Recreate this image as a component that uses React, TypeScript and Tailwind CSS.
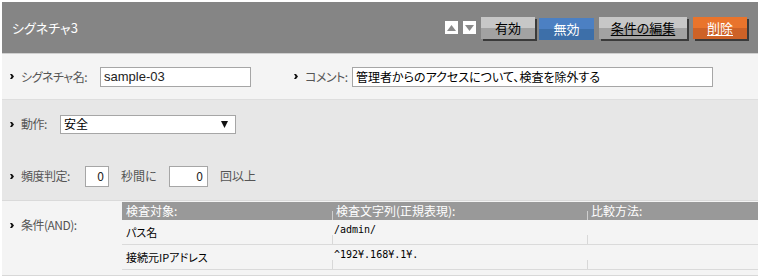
import React from "react";

const font = "font-['Noto_Sans_CJK_JP','Noto_Sans',sans-serif]";

function Bullet() {
  return (
    <svg width="4" height="5" viewBox="0 0 4 5" className="shrink-0">
      <path d="M0 0h2l2 2.5-2 2.5H0l1.5-2.5z" fill="#111" />
    </svg>
  );
}

function Label({ text, className = "" }: { text: string; className?: string }) {
  return (
    <div className={`flex items-center gap-[7px] shrink-0 whitespace-nowrap text-[12px] tracking-[-0.5px] text-[#555] [font-feature-settings:'palt'] ${className}`}>
      <Bullet />
      <span>{text}</span>
    </div>
  );
}

function HeadButton({
  label,
  top,
  bottom,
  w,
  light,
  underline,
  pressed,
}: {
  label: string;
  top: string;
  bottom: string;
  w: number;
  light?: boolean;
  underline?: boolean;
  pressed?: boolean;
}) {
  return (
    <button
      className={`h-[22px] flex items-center justify-center text-[13px] [font-feature-settings:'palt'] ${
        light ? "text-white" : "text-black"
      } ${underline ? "underline underline-offset-2" : ""} ${
        pressed ? "mt-[2px]" : "shadow-[2px_2px_0_#3a3a3a]"
      }`}
      style={{ width: w, background: `linear-gradient(${top} 50%, ${bottom} 50%)` }}
    >
      {label}
    </button>
  );
}

const rows = [
  { target: "パス名", pattern: "/admin/", method: "" },
  { target: "接続元IPアドレス", pattern: "^192¥.168¥.1¥.", method: "" },
];

export default function App() {
  return (
    <div className={`w-[760px] h-[278px] bg-white p-[2px] ${font}`}>
      <div className="w-[756px]">
        {/* header */}
        <div className="h-[52px] bg-[#858585] border-b border-[#cfcfcf] flex items-center justify-between pl-[10px] pr-[11px]">
          <span className="text-white text-[13px] [font-feature-settings:'palt']">シグネチャ3</span>
          <div className="flex items-center">
            <div className="w-[13px] h-[13px] bg-white flex items-center justify-center">
              <svg width="9" height="6" viewBox="0 0 9 6"><path d="M4.5 0L9 6H0z" fill="#8a8a8a" /></svg>
            </div>
            <div className="w-[13px] h-[13px] bg-white flex items-center justify-center ml-[5px]">
              <svg width="9" height="6" viewBox="0 0 9 6"><path d="M0 0h9L4.5 6z" fill="#8a8a8a" /></svg>
            </div>
            <div className="ml-[5px]">
              <HeadButton label="有効" top="#c7c7c7" bottom="#a2a2a2" w={54} />
            </div>
            <div className="ml-[4px]">
              <HeadButton label="無効" top="#4c80c3" bottom="#3d6fa9" w={55} light pressed />
            </div>
            <div className="ml-[5px]">
              <HeadButton label="条件の編集" top="#c7c7c7" bottom="#a2a2a2" w={88} underline />
            </div>
            <div className="ml-[6px]">
              <HeadButton label="削除" top="#e9742c" bottom="#cd6227" w={54} light underline />
            </div>
          </div>
        </div>

        {/* name / comment */}
        <div className="h-[46px] bg-[#f4f4f4] border-b border-[#dedede] flex items-center pl-[8px]">
          <Label text="シグネチャ名:" className="w-[90px]" />
          <input
            readOnly
            value="sample-03"
            className="w-[151px] h-[20px] bg-white border border-[#a6a6a6] px-[3px] text-[13px] text-[#222] font-['Liberation_Sans',sans-serif] outline-none"
          />
          <Label text="コメント:" className="ml-[43px] w-[58px]" />
          <input
            readOnly
            value="管理者からのアクセスについて、検査を除外する"
            className="w-[361px] h-[20px] bg-white border border-[#a6a6a6] px-[3px] text-[12px] text-black outline-none [font-feature-settings:'palt']"
          />
        </div>

        {/* action / frequency */}
        <div className="bg-[#e7e7e7] border-b border-[#dadada] pl-[8px]">
          <div className="h-[48px] flex items-center">
            <Label text="動作:" className="w-[50px]" />
            <div className="w-[176px] h-[19px] bg-white border border-[#a6a6a6] flex items-center justify-between pl-[3px] pr-[7px] text-[12px] text-black">
              <span>安全</span>
              <svg width="7" height="7" viewBox="0 0 7 7"><path d="M0 0h7L3.5 7z" fill="#111" /></svg>
            </div>
          </div>
          <div className="h-[48px] mt-[4px] flex items-center text-[12px] text-[#555]">
            <Label text="頻度判定:" className="w-[75px]" />
            <div className="w-[24px] h-[21px] bg-white border border-[#a6a6a6] flex items-center justify-end pr-[4px] text-[12px] text-[#222]">0</div>
            <span className="ml-[12px] w-[48px] [font-feature-settings:'palt']">秒間に</span>
            <div className="w-[39px] h-[21px] bg-white border border-[#a6a6a6] flex items-center justify-end pr-[4px] text-[12px] text-[#222]">0</div>
            <span className="ml-[12px] [font-feature-settings:'palt']">回以上</span>
          </div>
        </div>

        {/* conditions */}
        <div className="bg-[#f4f4f4] border-b border-[#d8d8d8] flex pt-[1px] pb-[5px]">
          <div className="w-[120px] pl-[8px] pt-[14px]">
            <Label text="条件(AND):" />
          </div>
          <div className="flex-1">
            <div className="h-[18px] bg-[#999999] grid grid-cols-[210px_255px_1fr] text-white text-[12px] [font-feature-settings:'palt']">
              {["検査対象:", "検査文字列(正規表現):", "比較方法:"].map((h, i) => (
                <div key={h} className="relative flex items-center pl-[4px]">
                  {i > 0 && <div className="absolute left-0 bottom-0 w-px h-[9px] bg-[#cfcfcf]" />}
                  {h}
                </div>
              ))}
            </div>
            {rows.map((r) => (
              <div key={r.target} className="h-[25px] border-b border-[#dadada] grid grid-cols-[210px_255px_1fr] text-[11px] text-black">
                <div className="pl-[4px] pt-[4px] [font-feature-settings:'palt']">{r.target}</div>
                <div className="relative pl-[2px] pt-[2px] font-['DejaVu_Sans_Mono',monospace] text-[10px]">
                  <div className="absolute left-0 bottom-0 w-px h-[9px] bg-[#d8d8d8]" />
                  {r.pattern}
                </div>
                <div className="relative pl-[4px] pt-[4px]">
                  <div className="absolute left-0 bottom-0 w-px h-[9px] bg-[#d8d8d8]" />
                  {r.method}
                </div>
              </div>
            ))}
          </div>
        </div>
      </div>
    </div>
  );
}
